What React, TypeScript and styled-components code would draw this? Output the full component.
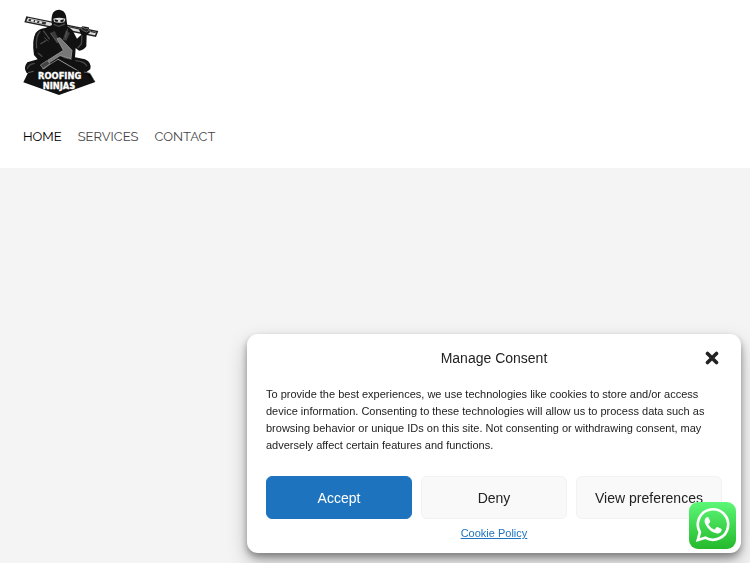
import React, { useState } from "react";
import styled, { createGlobalStyle } from "styled-components";

const GlobalStyle = createGlobalStyle`
  * { box-sizing: border-box; }
  body {
    margin: 0;
    background: #f4f4f4;
    color: #222;
    font-family: "Liberation Sans", Arial, sans-serif;
  }
`;

const Header = styled.header`
  background: #fff;
  padding: 9px 23px 21px;
`;

const HomeLink = styled.a`
  display: block;
  width: 76px;
  height: 87px;
`;

const LogoSvg = styled.svg`
  display: block;
  width: 100%;
  height: 100%;
`;

const Nav = styled.nav`
  display: flex;
  flex-wrap: wrap;
  gap: 16px;
  margin-top: 31px;
`;

const NavLink = styled.a<{ $active?: boolean }>`
  color: ${(p) => (p.$active ? "#000" : "#444")};
  font-family: Raleway, Lato, sans-serif;
  font-size: 13px;
  line-height: 20px;
  text-decoration: none;
`;

const Dialog = styled.section`
  position: fixed;
  right: 9px;
  bottom: 10px;
  width: min(494px, calc(100vw - 18px));
  padding: 14px 19px 11px;
  border-radius: 11px;
  background: #fff;
  box-shadow: 0 9px 19px rgba(0, 0, 0, 0.25), 0 4px 7px rgba(0, 0, 0, 0.35);
`;

const DialogHeader = styled.div`
  display: grid;
  grid-template-columns: 20px 1fr 20px;
  align-items: center;
`;

const Title = styled.h2`
  grid-column: 2;
  margin: 0;
  font-size: 14px;
  font-weight: 400;
  line-height: 20px;
  text-align: center;
`;

const CloseButton = styled.button`
  display: grid;
  place-items: center;
  width: 20px;
  height: 20px;
  padding: 0;
  border: 0;
  background: none;
  color: #222;
  cursor: pointer;
`;

const Message = styled.p`
  margin: 18px 0 22px;
  font-size: 11px;
  line-height: 17px;
`;

const Buttons = styled.div`
  display: grid;
  grid-template-columns: repeat(3, 1fr);
  gap: 9px;
`;

const ConsentButton = styled.button<{ $primary?: boolean }>`
  height: 43px;
  padding: 0;
  border: 1px solid ${(p) => (p.$primary ? "#1e73be" : "#f2f2f2")};
  border-radius: 6px;
  background: ${(p) => (p.$primary ? "#1e73be" : "#f9f9f9")};
  color: ${(p) => (p.$primary ? "#fff" : "#222")};
  font-family: inherit;
  font-size: 14px;
  cursor: pointer;
`;

const Policy = styled.div`
  margin-top: 6px;
  font-size: 11px;
  line-height: 17px;
  text-align: center;
`;

const PolicyLink = styled.a`
  color: #1e73be;
`;

const ChatLink = styled.a`
  position: fixed;
  right: 14px;
  bottom: 14px;
  width: 47px;
  height: 47px;
`;

const ChatSvg = styled.svg`
  display: block;
  width: 47px;
  height: 47px;
`;

function Logo() {
  return (
    <LogoSvg viewBox="24 27 228 261" role="img" aria-label="Roofing Ninjas">
      {/* spirit level */}
      <path d="M34 49 L250 93 L243 111 L28 67 Z" fill="#222" />
      <path d="M39 53 L244 96 L240 106 L34 64 Z" fill="#dedede" />
      <path d="M42 56 L94 67 L91 74 L40 63 Z" fill="#333" />
      <path d="M49 58 l8 2 -2 6 -8 -2z M61 61 l7 1 -2 6 -7 -1z M74 63 l8 2 -2 6 -8 -2z" fill="#eee" />
      <path d="M161 80 L198 88 M226 94 L242 98" stroke="#333" strokeWidth="4" />
      {/* body, arms and legs */}
      <path
        d="M111 75 Q107 52 114 38 Q121 29 133 29 Q149 31 153 47 L157 78 L172 90 L186 116 L199 104 L192 89 L202 79 L221 82 L225 97 L215 105 L214 139 Q207 151 192 152 L182 144 L180 172 L210 178 Q231 188 226 207 L211 219 L59 221 L35 219 Q24 203 37 187 L68 178 L57 165 Q50 121 62 99 Q72 86 91 84 Z"
        fill="#111"
      />
      <path d="M115 56 Q132 50 151 56 L148 67 Q132 70 117 66Z" fill="#ddd" />
      <path d="M119 58 L130 61 L127 66 L119 64Z M136 61 L147 58 L145 65 L137 66Z" fill="#111" />
      <path
        d="M76 94 Q61 107 65 145 M85 92 L104 118 M76 132 L94 121 M69 159 L82 170 M201 106 L199 132 L188 144 M59 190 Q39 193 37 207 M181 182 Q210 184 216 199 M145 172 L171 178 M116 73 L131 79 L150 72"
        fill="none"
        stroke="#484848"
        strokeWidth="4"
      />
      <path d="M105 99 L119 93 L133 122 L125 129 Z M153 91 L165 100 L154 122 L143 119 Z" fill="#3b3b3b" />
      <path d="M106 99 L130 130 M158 86 L151 113 M87 112 L101 124" stroke="#666" strokeWidth="2" />
      <path d="M197 86 l7 -5 6 6 7 -3 5 7 -7 5 -10 -4z" fill="#242424" stroke="#888" strokeWidth="2" />
      {/* saw */}
      <path d="M126 116 L135 113 L171 151 L168 176 L135 167 L103 188 L98 181 L145 151 Z" fill="#777" stroke="#aaa" strokeWidth="2" />
      <path d="M76 195 L96 182 L105 191 L86 208 Z" fill="#444" stroke="#999" strokeWidth="2" />
      <path d="M128 177 L202 220" stroke="#ddd" strokeWidth="2" />
      <path d="M82 207 L129 178" fill="none" stroke="#aaa" strokeWidth="2" />
      {/* name banner */}
      <path d="M39 218 L130 199 L224 219 L241 246 L132 285 L25 247 Z" fill="#111" />
      <path d="M39 218 L56 214 M207 216 L225 220 L239 244" stroke="#888" strokeWidth="2" />
      <g fill="#fff" stroke="#fff" strokeWidth="1" fontFamily="DejaVu Sans, sans-serif" fontWeight="700" textAnchor="middle">
        <text fontSize="25" x="134" y="237">ROOFING</text>
        <text fontSize="25" x="132" y="267">NINJAS</text>
      </g>
    </LogoSvg>
  );
}

function ChatIcon() {
  return (
    <ChatSvg viewBox="0 0 47 47" aria-hidden="true">
      <defs>
        <linearGradient id="chatGreen" x1="0" y1="0" x2="0" y2="1">
          <stop offset="0" stopColor="#5cf777" />
          <stop offset="1" stopColor="#25b92b" />
        </linearGradient>
      </defs>
      <rect width="47" height="47" rx="9" fill="url(#chatGreen)" />
      <path d="M8.8 38 L10.9 30.2 A15.2 15.2 0 1 1 16.3 35.6 Z" fill="none" stroke="#fff" strokeWidth="2.7" />
      <path
        d="M17.6 15.2 Q19.2 14.7 19.9 16.2 L21.1 19 Q21.4 19.8 20.8 20.5 L19.6 22 Q19.3 22.4 19.6 22.9 Q21.8 26 25.2 27.4 Q25.7 27.6 26.1 27.1 L27.5 25.3 Q27.9 24.8 28.5 25.1 L32.1 26.8 Q32.8 27.2 32.7 28 Q32.2 31.3 28.2 31.4 Q22.8 30.8 18.6 25.7 Q15.7 22.3 15.5 19.3 Q15.4 16.6 17.6 15.2 Z"
        fill="#fff"
      />
    </ChatSvg>
  );
}

const pages = ["Home", "Services", "Contact"];

export default function App() {
  const [open, setOpen] = useState(true);
  const close = () => setOpen(false);

  return (
    <>
      <GlobalStyle />
      <Header>
        <HomeLink href="#home" aria-label="Roofing Ninjas home">
          <Logo />
        </HomeLink>
        <Nav aria-label="Main">
          {pages.map((page, i) => (
            <NavLink key={page} href={`#${page.toLowerCase()}`} $active={i === 0}>
              {page.toUpperCase()}
            </NavLink>
          ))}
        </Nav>
      </Header>
      {open && (
        <Dialog role="dialog" aria-labelledby="consent-title">
          <DialogHeader>
            <Title id="consent-title">Manage Consent</Title>
            <CloseButton type="button" aria-label="Close dialog" onClick={close}>
              <svg width="14" height="14" viewBox="0 0 14 14" aria-hidden="true">
                <path d="M2.5 2.5 L11.5 11.5 M11.5 2.5 L2.5 11.5" stroke="currentColor" strokeWidth="3.6" strokeLinecap="round" />
              </svg>
            </CloseButton>
          </DialogHeader>
          <Message>
            To provide the best experiences, we use technologies like cookies to store and/or access device
            information. Consenting to these technologies will allow us to process data such as browsing behavior or
            unique IDs on this site. Not consenting or withdrawing consent, may adversely affect certain features and
            functions.
          </Message>
          <Buttons>
            <ConsentButton type="button" $primary onClick={close}>Accept</ConsentButton>
            <ConsentButton type="button" onClick={close}>Deny</ConsentButton>
            <ConsentButton type="button">View preferences</ConsentButton>
          </Buttons>
          <Policy>
            <PolicyLink href="#cookie-policy">Cookie Policy</PolicyLink>
          </Policy>
        </Dialog>
      )}
      <ChatLink href="#chat" aria-label="Chat on WhatsApp">
        <ChatIcon />
      </ChatLink>
    </>
  );
}
